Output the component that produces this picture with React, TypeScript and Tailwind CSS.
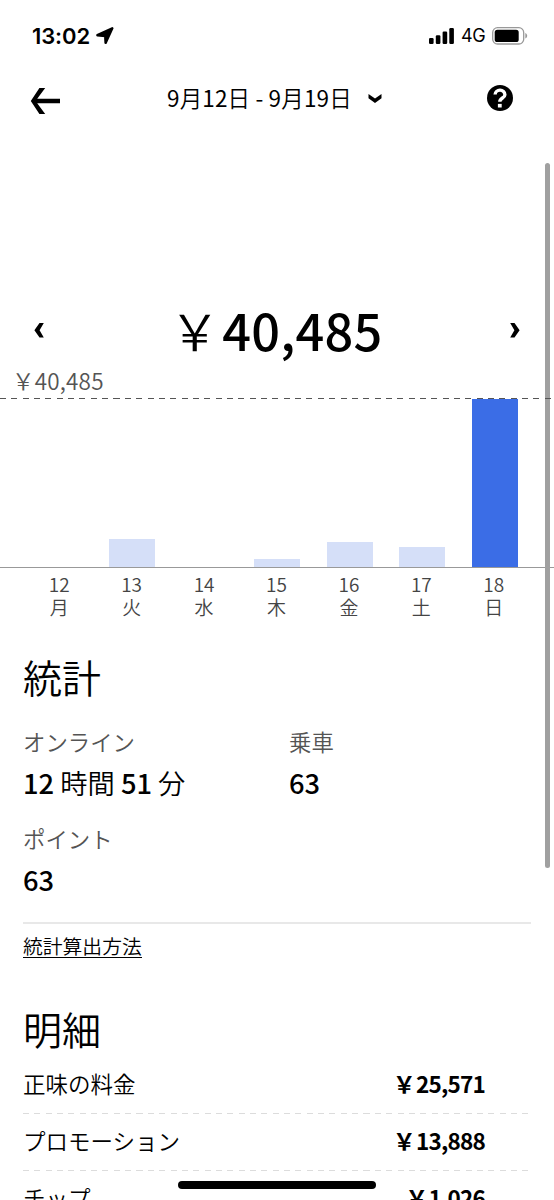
import { ReactNode } from 'react';

const days = [
  { date: '12', weekday: '月', height: 0 },
  { date: '13', weekday: '火', height: 28 },
  { date: '14', weekday: '水', height: 0 },
  { date: '15', weekday: '木', height: 8 },
  { date: '16', weekday: '金', height: 25 },
  { date: '17', weekday: '土', height: 20 },
  { date: '18', weekday: '日', height: 168, selected: true },
];

const details = [
  { label: '正味の料金', value: '25,571' },
  { label: 'プロモーション', value: '13,888' },
  { label: 'チップ', value: '1,026' },
];

const StatusBar = () => (
  <div className="flex h-[72px] items-center justify-between pl-8 pr-[26px] font-['Inter',sans-serif]">
    <div className="flex h-[70px] items-center gap-[6px]">
      <span className="text-[22px] font-semibold leading-none tracking-[-0.1px]">13:02</span>
      <svg width="18" height="18" viewBox="0 0 18 18">
        <path
          d="M16.3 1.3 1.4 8.2l7.8.9.4 6.8Z"
          stroke="#000"
          strokeWidth="2.4"
          strokeLinejoin="round"
        />
      </svg>
    </div>
    <div className="flex h-[70px] items-center">
      <svg width="25" height="17" viewBox="0 0 25 17">
        <rect x="0" y="10" width="4.6" height="6" rx="1.2" />
        <rect x="6.8" y="7.2" width="4.6" height="8.8" rx="1.2" />
        <rect x="13.6" y="3.5" width="4.6" height="12.5" rx="1.2" />
        <rect x="20.3" y="0" width="4.6" height="16" rx="1.2" />
      </svg>
      <span className="ml-[7px] w-[25px] text-[18px] leading-none tracking-[-0.4px]">4G</span>
      <svg className="ml-[6px]" width="36" height="18" viewBox="0 0 36 18">
        <rect x="0.7" y="0.7" width="31" height="16.3" rx="4.8" fill="none" stroke="#999" strokeWidth="1.3" />
        <rect x="2.7" y="2.8" width="24" height="12.2" rx="2.6" />
        <path d="M33.3 6v5.6c1.2-.5 1.9-1.6 1.9-2.8s-.7-2.3-1.9-2.8Z" fill="#999" />
      </svg>
    </div>
  </div>
);

const Header = () => (
  <header className="flex h-[52px] items-center px-[30px]">
    <svg className="mt-[5px]" width="30" height="26" viewBox="0 0 30 26">
      <path d="M9.4 0h5.8L7.2 10.8H30v4.5H7.2L15.2 26H9.4L0.8 13.1Z" />
    </svg>
    <div className="ml-[107px] flex w-[215px] items-center justify-between">
      <span className="mb-[2px] whitespace-nowrap text-[22.5px] leading-none tracking-[0.15px]">
        9<span className="font-[350]">月</span>12<span className="font-[350]">日</span> - 9
        <span className="font-[350]">月</span>19<span className="font-[350]">日</span>
      </span>
      <svg width="14" height="9" viewBox="0 0 14 9">
        <path d="M0.5 0 7 4.4 13.5 0v4.2L7 9 0.5 4.2Z" />
      </svg>
    </div>
    <svg className="ml-[105px]" width="26" height="26" viewBox="0 0 26 26">
      <circle cx="13" cy="13" r="13" />
      <path d="M8.1 9.6a4.9 4.5 0 0 1 9.8.1c0 3.5-5.1 3.2-5.1 7.1" fill="none" stroke="#fff" strokeWidth="3.4" />
      <rect x="10.9" y="18.9" width="3.8" height="3.6" fill="#fff" />
    </svg>
  </header>
);

const Amount = () => (
  <div className="mt-[166px] flex h-20 items-center justify-between px-[34px]">
    <svg width="10" height="15" viewBox="0 0 10 15">
      <path d="M5.5 0H9.8L5.6 7.2 9.8 14.4H5.5L0.4 7.2Z" />
    </svg>
    <span className="mb-[3px] whitespace-nowrap text-[50.5px] font-medium leading-[70px] tracking-[0.2px]">
      <span className="-ml-[2px] mr-[2px] font-[350]">￥</span>40,485
    </span>
    <svg width="10" height="15" viewBox="0 0 10 15">
      <path d="M4.5 0H0.2L4.4 7.2 0.2 14.4H4.5L9.6 7.2Z" />
    </svg>
  </div>
);

const Chart = () => (
  <section>
    <div className="h-[28px] pl-[12px] text-[22.5px] font-[350] leading-[20px] tracking-[0.2px] text-[#545454]">
      ￥40,485
    </div>
    <div className="relative h-[170px] border-b border-[#999] px-[23px]">
      <div className="absolute left-0 top-0 z-10 h-px w-[551px] bg-[repeating-linear-gradient(90deg,#555_0_6px,transparent_6px_11.35px)]" />
      <div className="grid h-full grid-cols-7 items-end justify-items-center">
        {days.map((day) => (
          <div
            key={day.date}
            className={`w-[46px] ${day.selected ? 'bg-[#3b6de6]' : 'bg-[#d5dff8]'}`}
            style={{ height: day.height }}
          />
        ))}
      </div>
    </div>
    <div className="grid grid-cols-7 pl-[23px] pr-[24px] pt-[4px] text-center text-[19px] font-[350] leading-[24px] text-[#444]">
      {days.map((day) => (
        <div key={day.date}>
          <div>{day.date}</div>
          <div className="leading-[22px]">{day.weekday}</div>
        </div>
      ))}
    </div>
  </section>
);

const Stat = ({ label, children }: { label: string; children: ReactNode }) => (
  <div className="h-[97px]">
    <div className="text-[22.4px] font-[350] leading-8 text-[#545454]">{label}</div>
    <div className="mt-[4px] text-[27.3px] font-[350] leading-[42px]">{children}</div>
  </div>
);

const Stats = () => (
  <section className="px-[23px]">
    <h2 className="mt-[28px] text-[39px] font-[350] leading-[60px]">統計</h2>
    <div className="mt-[19px] grid grid-cols-2">
      <Stat label="オンライン">
        <span className="font-medium">12</span> 時間 <span className="font-medium">51</span> 分
      </Stat>
      <div className="pl-3">
        <Stat label="乗車">
          <span className="font-medium">63</span>
        </Stat>
      </div>
      <Stat label="ポイント">
        <span className="font-medium">63</span>
      </Stat>
    </div>
    <div className="mt-[3px] h-[2px] bg-[#e8e8e8]" />
    <a className="mt-[11px] block h-[23px] w-fit border-b-[1.5px] border-black text-[19.8px] font-[350] leading-[21px]">
      統計算出方法
    </a>
  </section>
);

const Details = () => (
  <section className="mt-[41px] pl-[23px] pr-[25px]">
    <h2 className="text-[39px] font-[350] leading-[58px]">明細</h2>
    {details.map((item) => (
      <div key={item.label} className="h-[57px]">
        <div className="flex h-[53px] items-center justify-between pr-[44px] text-[22.5px]">
          <span className="font-[350]">{item.label}</span>
          <span className="font-bold tracking-[-0.8px]">
            <span className="mr-[1.5px]">￥</span>
            {item.value}
          </span>
        </div>
        <div className="mt-[3px] h-px bg-[repeating-linear-gradient(90deg,#dcdcdc_0_6px,transparent_6px_11.35px)]" />
      </div>
    ))}
  </section>
);

const App = () => {
  return (
    <div className="relative h-[1200px] w-[554px] overflow-hidden bg-white font-['Noto_Sans_CJK_JP',sans-serif] text-black">
      <StatusBar />
      <Header />
      <Amount />
      <Chart />
      <Stats />
      <Details />
      <div className="absolute left-[545px] top-[163px] h-[705px] w-[5px] rounded-full bg-[#a0a0a0]" />
      <div className="absolute left-[178px] top-[1181px] h-[8px] w-[198px] rounded-full bg-black" />
    </div>
  );
};

export default App;
